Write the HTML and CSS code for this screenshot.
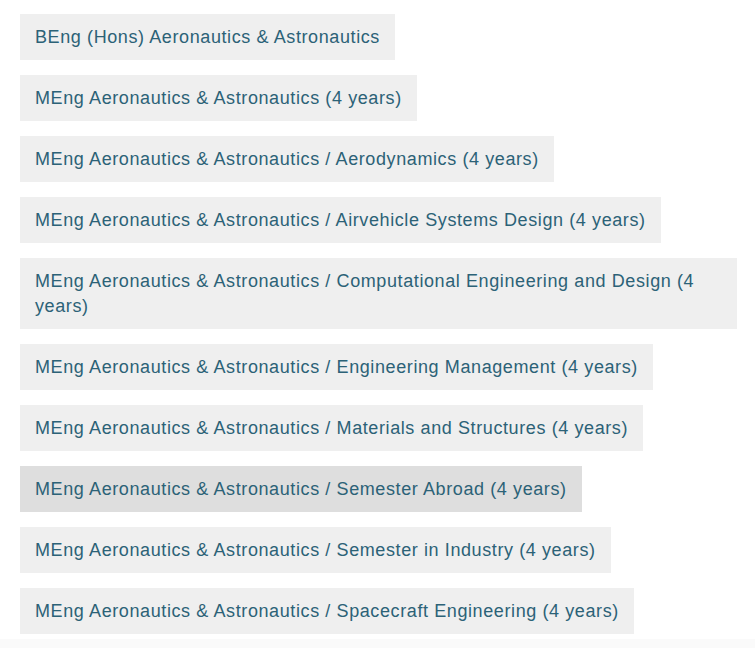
FILE: index.html
```html
<!DOCTYPE html>
<html>
  <head>
    <title>Courses</title>
    <link rel="stylesheet" href="styles.css">
  </head>
  <body>
    <div class="course-list">
      <a class="course-button" href="#">BEng (Hons) Aeronautics &amp; Astronautics</a>
      <a class="course-button" href="#">MEng Aeronautics &amp; Astronautics (4 years)</a>
      <a class="course-button" href="#">MEng Aeronautics &amp; Astronautics / Aerodynamics (4 years)</a>
      <a class="course-button" href="#">MEng Aeronautics &amp; Astronautics / Airvehicle Systems Design (4 years)</a>
      <a class="course-button" href="#">MEng Aeronautics &amp; Astronautics / Computational Engineering and Design (4 years)</a>
      <a class="course-button" href="#">MEng Aeronautics &amp; Astronautics / Engineering Management (4 years)</a>
      <a class="course-button" href="#">MEng Aeronautics &amp; Astronautics / Materials and Structures (4 years)</a>
      <a class="course-button active" href="#">MEng Aeronautics &amp; Astronautics / Semester Abroad (4 years)</a>
      <a class="course-button" href="#">MEng Aeronautics &amp; Astronautics / Semester in Industry (4 years)</a>
      <a class="course-button" href="#">MEng Aeronautics &amp; Astronautics / Spacecraft Engineering (4 years)</a>
    </div>
    <div class="page-bottom"></div>
  </body>
</html>
```

FILE: styles.css
```css
/* Page */
body {
  margin: 0;
  padding-top: 14px;
  background-color: white;
  font-family: "Liberation Sans", Arial, sans-serif;
}

/* Course list */
.course-list {
  display: flex;
  flex-direction: column;
  align-items: flex-start;
  gap: 15px;
  padding: 0 18px 0 20px;
}

.course-button {
  display: block;
  padding: 11px 15px 10px 15px;
  font-size: 18px;
  line-height: 25px;
  letter-spacing: 0.6px;
  color: #2c6277;
  background-color: #efefef;
  text-decoration: none;
}

.course-button:hover,
.course-button.active {
  background-color: #dedede;
}

.page-bottom {
  margin-top: 5px;
  height: 20px;
  background-color: #fafafa;
}
```
